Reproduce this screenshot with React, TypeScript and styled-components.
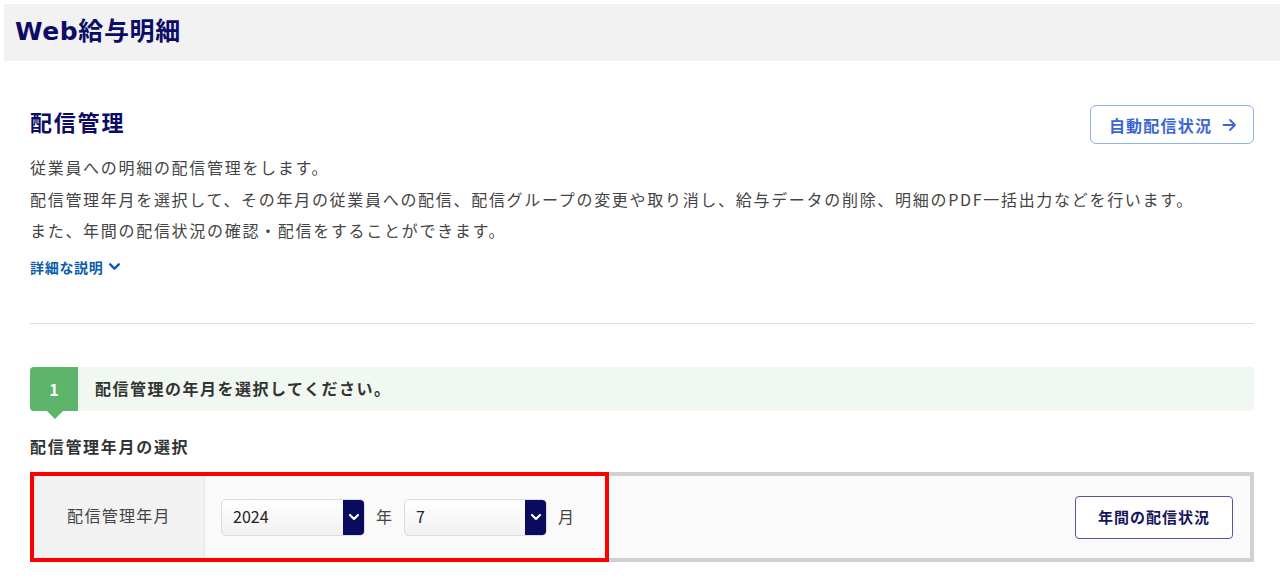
import React from "react";
import styled, { createGlobalStyle } from "styled-components";

const GlobalStyle = createGlobalStyle`
  html, body { margin: 0; padding: 0; background: #ffffff; }
  body {
    font-family: "Noto Sans CJK JP", "Noto Sans", sans-serif;
    color: #444444;
  }
  * { box-sizing: border-box; }
`;

const Page = styled.div`
  padding: 4px 0 24px 4px;
`;

const Header = styled.header`
  height: 57px;
  background: #f2f2f2;
  display: flex;
  align-items: center;
  padding-left: 11px;
`;

const SiteTitle = styled.h1`
  margin: 0;
  font-family: "DejaVu Sans", "Noto Sans CJK JP", sans-serif;
  font-size: 25px;
  font-weight: 700;
  color: #0c0c66;
  letter-spacing: 0.6px;
  line-height: 1;
  padding-bottom: 2px;
`;

const Main = styled.main`
  padding: 0 26px 0 26px;
`;

const TitleRow = styled.div`
  margin-top: 44px;
  display: flex;
  align-items: center;
  justify-content: space-between;
`;

const PageTitle = styled.h2`
  margin: 0;
  padding-bottom: 8px;
  font-size: 22px;
  font-weight: 700;
  color: #0c0c66;
  letter-spacing: 1.8px;
  line-height: 30px;
`;

const OutlineLink = styled.button`
  height: 39px;
  width: 164px;
  border: 1px solid #8db0ea;
  border-radius: 6px;
  background: #ffffff;
  color: #3b66d4;
  font-family: inherit;
  font-size: 16px;
  font-weight: 700;
  letter-spacing: 1.2px;
  display: flex;
  align-items: center;
  justify-content: center;
  gap: 10px;
  padding: 0 0 0 2px;
  cursor: pointer;
`;

const Description = styled.p`
  margin: 8px 0 0;
  font-size: 16px;
  line-height: 31.5px;
  letter-spacing: 1.7px;
  color: #444444;
`;

const DetailToggle = styled.a`
  margin-top: 10px;
  display: inline-flex;
  align-items: center;
  gap: 4px;
  font-size: 14px;
  font-weight: 700;
  line-height: 20px;
  letter-spacing: 0.7px;
  color: #0b5cad;
  text-decoration: none;
  cursor: pointer;
`;

const Divider = styled.hr`
  margin: 45px 0 0;
  border: none;
  border-top: 1px solid #dddddd;
`;

const StepBar = styled.div`
  margin-top: 43px;
  height: 44px;
  display: flex;
  align-items: center;
  background: #f1f8f1;
  border-radius: 4px;
`;

const StepNumber = styled.div`
  position: relative;
  width: 48px;
  height: 44px;
  background: #5cb56b;
  border-radius: 4px 0 0 4px;
  color: #ffffff;
  font-size: 16px;
  font-weight: 700;
  display: flex;
  align-items: center;
  justify-content: center;
  &::after {
    content: "";
    position: absolute;
    left: 17px;
    bottom: -8px;
    border-left: 8px solid transparent;
    border-right: 8px solid transparent;
    border-top: 8px solid #5cb56b;
  }
`;

const StepText = styled.div`
  margin-left: 17px;
  padding-bottom: 2px;
  font-size: 16px;
  font-weight: 700;
  letter-spacing: 1.5px;
  color: #333333;
`;

const SectionLabel = styled.h3`
  margin: 23px 0 0;
  font-size: 16px;
  font-weight: 700;
  line-height: 24px;
  letter-spacing: 1.7px;
  color: #333333;
`;

const FormTableWrap = styled.div`
  position: relative;
  margin-top: 14px;
`;

const FormTable = styled.div`
  height: 90px;
  border: 4px solid #d0d0d0;
  display: flex;
  background: #fafafa;
`;

const Highlight = styled.div`
  position: absolute;
  left: 0;
  top: 0;
  width: 579px;
  height: 90px;
  border: 4px solid #ff0000;
  pointer-events: none;
`;

const LabelCell = styled.div`
  width: 171px;
  background: #f2f2f2;
  border-right: 1px solid #e6e6e6;
  display: flex;
  align-items: center;
  justify-content: center;
  padding-bottom: 3px;
  font-size: 16px;
  letter-spacing: 1.3px;
  color: #444444;
`;

const InputCell = styled.div`
  flex: 1;
  display: flex;
  align-items: center;
  padding: 1px 17px 0 16px;
`;

const SelectBox = styled.div<{ $width: number }>`
  width: ${(p) => p.$width}px;
  height: 37px;
  display: flex;
  border: 1px solid #dcdcdc;
  border-radius: 5px;
  background: linear-gradient(#ffffff, #f1f1f1);
  overflow: hidden;
`;

const SelectValue = styled.div`
  flex: 1;
  display: flex;
  align-items: center;
  padding-left: 11px;
  padding-bottom: 3px;
  font-size: 16px;
  color: #222222;
`;

const SelectArrow = styled.div`
  width: 21px;
  background: #0a0a5e;
  display: flex;
  align-items: center;
  justify-content: center;
`;

const Unit = styled.span`
  margin: 0 12px 3px 11px;
  font-size: 16px;
  color: #444444;
`;

const Spacer = styled.div`
  flex: 1;
`;

const NavyButton = styled.button`
  width: 158px;
  height: 43px;
  border: 1px solid #56569e;
  border-radius: 4px;
  background: #ffffff;
  color: #15155e;
  font-family: inherit;
  font-size: 15px;
  font-weight: 700;
  letter-spacing: 1px;
  padding: 0 0 2px;
  cursor: pointer;
`;

const Chevron = ({ color, size, stroke }: { color: string; size: number; stroke: number }) => (
  <svg width={size} height={size} viewBox="0 0 12 12" fill="none">
    <path d="M2 4 L6 8 L10 4" stroke={color} strokeWidth={stroke} strokeLinecap="round" strokeLinejoin="round" />
  </svg>
);

const Arrow = () => (
  <svg width="15" height="14" viewBox="0 0 15 14" fill="none">
    <path d="M1.5 7 H13 M8 2 L13 7 L8 12" stroke="#3b66d4" strokeWidth="1.8" strokeLinecap="round" strokeLinejoin="round" />
  </svg>
);

export default function App() {
  return (
    <>
      <GlobalStyle />
      <Page>
        <Header>
          <SiteTitle>Web給与明細</SiteTitle>
        </Header>
        <Main>
          <TitleRow>
            <PageTitle>配信管理</PageTitle>
            <OutlineLink>
              自動配信状況
              <Arrow />
            </OutlineLink>
          </TitleRow>
          <Description>
            従業員への明細の配信管理をします。
            <br />
            配信管理年月を選択して、その年月の従業員への配信、配信グループの変更や取り消し、給与データの削除、明細のPDF一括出力などを行います。
            <br />
            また、年間の配信状況の確認・配信をすることができます。
          </Description>
          <DetailToggle>
            詳細な説明
            <Chevron color="#0b5cad" size={13} stroke={2.2} />
          </DetailToggle>
          <Divider />
          <StepBar>
            <StepNumber>1</StepNumber>
            <StepText>配信管理の年月を選択してください。</StepText>
          </StepBar>
          <SectionLabel>配信管理年月の選択</SectionLabel>
          <FormTableWrap>
            <FormTable>
              <LabelCell>配信管理年月</LabelCell>
              <InputCell>
                <SelectBox $width={144}>
                  <SelectValue>2024</SelectValue>
                  <SelectArrow>
                    <Chevron color="#ffffff" size={12} stroke={2.2} />
                  </SelectArrow>
                </SelectBox>
                <Unit>年</Unit>
                <SelectBox $width={143}>
                  <SelectValue>7</SelectValue>
                  <SelectArrow>
                    <Chevron color="#ffffff" size={12} stroke={2.2} />
                  </SelectArrow>
                </SelectBox>
                <Unit>月</Unit>
                <Spacer />
                <NavyButton>年間の配信状況</NavyButton>
              </InputCell>
            </FormTable>
            <Highlight />
          </FormTableWrap>
        </Main>
      </Page>
    </>
  );
}
